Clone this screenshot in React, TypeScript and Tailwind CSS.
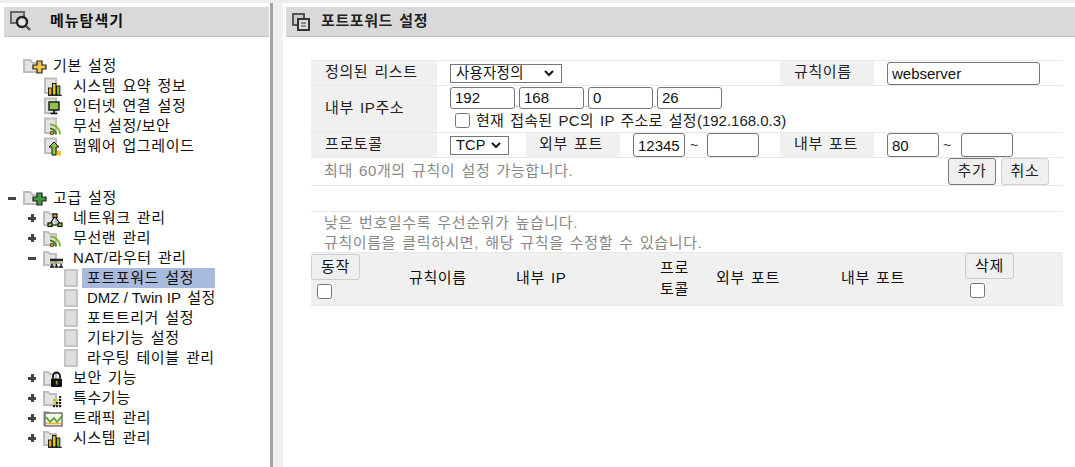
import type { ReactNode } from "react";

const FONT = "font-['Liberation_Sans','Noto_Sans_CJK_KR',sans-serif]";
const TEXT = "text-[15px] tracking-[0.6px] [word-spacing:1.5px]";

function Folder({ big = false, children }: { big?: boolean; children?: ReactNode }) {
  // folder tree icon, overlay drawn by children in the same box
  return (
    <svg width={big ? 24 : 22} height="20" viewBox={big ? "0 0 24 20" : "0 0 22 20"} className="block shrink-0">
      {big ? (
        <path d="M1 4h6l3 3h6v9H1z" fill="#e4e4e4" stroke="#bdbdbd" strokeWidth="2" />
      ) : (
        <path d="M1 4h4l2 2h6v11H1z" fill="#e4e4e4" stroke="#bdbdbd" strokeWidth="2" />
      )}
      {children}
    </svg>
  );
}

function Doc({ children }: { children?: ReactNode }) {
  return (
    <svg width="20" height="20" viewBox="0 0 20 20" className="block shrink-0">
      <rect x="2" y="2.5" width="11" height="14.5" fill="#e4e4e4" stroke="#bdbdbd" strokeWidth="2" />
      {children}
    </svg>
  );
}

function Page() {
  return (
    <svg width="14" height="18" viewBox="0 0 14 18" className="block shrink-0">
      <rect x="1" y="1" width="12" height="16" fill="#dedede" stroke="#c4c4c4" strokeWidth="2" />
    </svg>
  );
}

const Plus = ({ fill }: { fill: string }) => (
  <path d="M10 9h4V5h5v4h4v4h-4v4h-5v-4h-4z" fill={fill} stroke="#222" strokeWidth="1.2" />
);

const Bars = () => (
  <g stroke="#111" strokeWidth="0.9">
    <rect x="5.5" y="12" width="3.4" height="7" fill="#f0a020" />
    <rect x="9.5" y="7.5" width="3.4" height="11.5" fill="#e8c820" />
    <rect x="13.5" y="10" width="3.4" height="9" fill="#7cb82f" />
    <path d="M5 19.4h14" />
  </g>
);

const Monitor = () => (
  <g>
    <rect x="6" y="6" width="10" height="8" fill="#8fc34a" stroke="#111" strokeWidth="1.4" />
    <path d="M11 14v3M7.5 17.5h7" stroke="#111" strokeWidth="1.6" />
  </g>
);

const Wifi = () => (
  <g fill="none" strokeWidth="1.8" transform="translate(1 2)">
    <circle cx="8" cy="15" r="1.8" fill="#e8a020" stroke="#222" strokeWidth="0.8" />
    <path d="M6 10.5a6 6 0 0 1 6 6" stroke="#3f7a18" />
    <path d="M6 6.5a10 10 0 0 1 10 10" stroke="#7cb82f" />
  </g>
);

const Upload = () => (
  <g>
    <rect x="9" y="15" width="9" height="4.5" fill="#f0c030" />
    <path d="M11 6l5 5h-3v8H9v-8H6z" fill="#8cc63f" stroke="#1a1a1a" strokeWidth="1" />
  </g>
);

const Network = () => (
  <g fill="none" stroke="#111" strokeWidth="1.2" transform="translate(1 2)">
    <path d="M11 6l-5 8M11 6l5 8M6 15h10" />
    <rect x="9" y="4" width="4" height="3.5" fill="#f0a020" />
    <rect x="4" y="13" width="4" height="3.5" fill="#8cc63f" />
    <rect x="14" y="13" width="4" height="3.5" fill="#8cc63f" />
  </g>
);

const Router = () => (
  <g stroke="#111" strokeWidth="1.4" fill="none" transform="translate(1 2)">
    <path d="M6 10h13" strokeWidth="2.6" stroke="#222" />
    <path d="M6 13h13" stroke="#8a9a50" />
    <path d="M8 14v3M12.5 14v3M17 14v3M6 17h4M10.5 17h4M15 17h4" />
  </g>
);

const Lock = () => (
  <g transform="translate(2 1.5)">
    <path d="M8 9V6.5a3.5 3.5 0 0 1 7 0V9" fill="none" stroke="#111" strokeWidth="1.8" />
    <rect x="6" y="9" width="11" height="8.5" rx="1" fill="#111" />
    <rect x="10.8" y="11.5" width="1.8" height="3.5" fill="#7cb82f" />
  </g>
);

const DOTS: [number, number, string][] = [
  [15, 8, "#222"],
  [9, 11, "#8cc63f"],
  [12, 11, "#e8c820"],
  [15, 11, "#222"],
  [9, 14, "#e8c820"],
  [12, 14, "#222"],
  [15, 14, "#222"],
  [9, 17, "#222"],
  [12, 17, "#222"],
  [15, 17, "#222"],
];

const Dots = () => (
  <g transform="translate(1 0)">
    {DOTS.map(([x, y, c], i) => (
      <rect key={i} x={x} y={y} width="2.2" height="2.2" fill={c} />
    ))}
  </g>
);

const Traffic = () => (
  <g fill="none">
    <rect x="2" y="5" width="17" height="13" fill="#f6f6e6" stroke="#555" strokeWidth="1.2" />
    <path d="M3 9l4 5 4-4 3 4 5-6" stroke="#5aa02c" strokeWidth="1.8" />
    <path d="M3 15.5h15" stroke="#f0b030" strokeWidth="1.6" />
  </g>
);

function TreeRow({
  toggle,
  indent,
  icon,
  selected,
  textGap,
  children,
}: {
  toggle?: "+" | "-";
  indent: string;
  icon: ReactNode;
  selected?: boolean;
  textGap: string;
  children: ReactNode;
}) {
  return (
    <div className={`flex h-5 items-center ${indent}`}>
      {toggle && (
        <span className="relative mr-[7px] block h-2 w-2 shrink-0">
          <span className="absolute left-0 top-[3px] h-[2.5px] w-2 bg-[#444]" />
          {toggle === "+" && <span className="absolute left-[3px] top-0 h-2 w-[2.5px] bg-[#444]" />}
        </span>
      )}
      {icon}
      <span className={`${textGap} h-5 ${selected ? "bg-[#a8bbdc]" : ""} whitespace-nowrap leading-[19px] ${TEXT} text-[#111]`}>
        {children}
      </span>
    </div>
  );
}

function Sidebar() {
  const lv2 = "pl-[64px]";
  const lv1 = "pl-[28px]";
  return (
    <aside className="w-[270px] shrink-0">
      <div className="ml-[4px] flex h-[30px] w-[265px] items-center border-b border-[#c4c4c4] bg-[#d9d9d9]">
        <svg width="22" height="24" viewBox="0 0 22 24" className="ml-[6px] block shrink-0">
          <rect x="1" y="2" width="13" height="11" fill="#ccc" stroke="#666" strokeWidth="2" />
          <circle cx="12" cy="12" r="5" fill="#e4e4e4" stroke="#222" strokeWidth="2.4" />
          <path d="M16 16l4 4" stroke="#555" strokeWidth="2.4" />
        </svg>
        <span className="ml-[18px] text-[15px] font-bold tracking-[1px] text-[#111]">메뉴탐색기</span>
      </div>
      <div className="pt-[19px]">
        <TreeRow indent="pl-[23px]" textGap="ml-[6px]" icon={<Folder big><Plus fill="#f2c350" /></Folder>}>
          기본 설정
        </TreeRow>
        <TreeRow indent="pl-[43px]" textGap="ml-[10px]" icon={<Doc><Bars /></Doc>}>시스템 요약 정보</TreeRow>
        <TreeRow indent="pl-[43px]" textGap="ml-[10px]" icon={<Doc><Monitor /></Doc>}>인터넷 연결 설정</TreeRow>
        <TreeRow indent="pl-[43px]" textGap="ml-[10px]" icon={<Doc><Wifi /></Doc>}>무선 설정/보안</TreeRow>
        <TreeRow indent="pl-[43px]" textGap="ml-[10px]" icon={<Doc><Upload /></Doc>}>펌웨어 업그레이드</TreeRow>

        <div className="h-[32px]" />

        <TreeRow toggle="-" indent="pl-[8px]" textGap="ml-[6px]" icon={<Folder big><Plus fill="#3f9a3f" /></Folder>}>
          고급 설정
        </TreeRow>
        <TreeRow toggle="+" indent={lv1} textGap="ml-[8px]" icon={<Folder><Network /></Folder>}>네트워크 관리</TreeRow>
        <TreeRow toggle="+" indent={lv1} textGap="ml-[8px]" icon={<Folder><Wifi /></Folder>}>무선랜 관리</TreeRow>
        <TreeRow toggle="-" indent={lv1} textGap="ml-[8px]" icon={<Folder><Router /></Folder>}>NAT/라우터 관리</TreeRow>
        <TreeRow indent={lv2} textGap="ml-[4px] w-[133px] pl-[5px]" selected icon={<Page />}>포트포워드 설정</TreeRow>
        <TreeRow indent={lv2} textGap="ml-[9px]" icon={<Page />}>
          <span className="tracking-normal [word-spacing:0]">DMZ / Twin IP</span> 설정
        </TreeRow>
        <TreeRow indent={lv2} textGap="ml-[9px]" icon={<Page />}>포트트리거 설정</TreeRow>
        <TreeRow indent={lv2} textGap="ml-[9px]" icon={<Page />}>기타기능 설정</TreeRow>
        <TreeRow indent={lv2} textGap="ml-[9px]" icon={<Page />}>라우팅 테이블 관리</TreeRow>
        <TreeRow toggle="+" indent={lv1} textGap="ml-[8px]" icon={<Folder><Lock /></Folder>}>보안 기능</TreeRow>
        <TreeRow toggle="+" indent={lv1} textGap="ml-[8px]" icon={<Folder><Dots /></Folder>}>특수기능</TreeRow>
        <TreeRow toggle="+" indent={lv1} textGap="ml-[8px]" icon={<Folder><Traffic /></Folder>}>트래픽 관리</TreeRow>
        <TreeRow toggle="+" indent={lv1} textGap="ml-[8px]" icon={<Folder><Bars /></Folder>}>시스템 관리</TreeRow>
      </div>
    </aside>
  );
}

const inputCls =
  "box-border rounded-[3px] border border-[#767676] bg-white px-[4px] text-[15px] text-[#111] outline-none";
const labelCls = `flex items-center bg-[#f0f0f0] pb-[2px] ${TEXT} text-[#222]`;
const rowLine = "border-b border-[#ece9dc]";

function IpInput({ value }: { value: string }) {
  return <input readOnly value={value} className={`${inputCls} h-[22px] w-[65px]`} />;
}

function Dot() {
  return <span className="w-[4px] text-center text-[10px] leading-[10px] text-[#555]">.</span>;
}

function Select({ value, width }: { value: string; width: string }) {
  return (
    <div className={`relative h-[19px] ${width}`}>
      <select
        className="box-border block h-[19px] w-full appearance-none border border-[#767676] bg-white pl-[5px] text-[14.5px] leading-[17px] tracking-[0.2px] text-[#111]"
        defaultValue={value}
      >
        <option>{value}</option>
      </select>
      <svg width="10" height="7" viewBox="0 0 10 7" className="pointer-events-none absolute right-[8px] top-[6px]">
        <path d="M1 1l4 4 4-4" fill="none" stroke="#111" strokeWidth="2" />
      </svg>
    </div>
  );
}

function PortForm() {
  return (
    <div className="w-[752px] border-t border-[#ece9dc]">
      {/* 정의된 리스트 */}
      <div className={`flex h-[25px] ${rowLine}`}>
        <div className={`${labelCls} w-[126px] pl-[14px]`}>정의된 리스트</div>
        <div className="flex w-[343px] items-center pl-[13px]">
          <Select value="사용자정의" width="w-[112px]" />
        </div>
        <div className={`${labelCls} w-[94px] pl-[14px]`}>규칙이름</div>
        <div className="flex items-center pl-[13px]">
          <input readOnly value="webserver" className={`${inputCls} h-[23px] w-[153px]`} />
        </div>
      </div>

      {/* 내부 IP주소 */}
      <div className={`flex h-[47px] ${rowLine}`}>
        <div className={`${labelCls} w-[126px] pl-[14px]`}>내부 IP주소</div>
        <div className="pl-[13px] pt-px">
          <div className="flex items-end">
            <IpInput value="192" />
            <Dot />
            <IpInput value="168" />
            <Dot />
            <IpInput value="0" />
            <Dot />
            <IpInput value="26" />
          </div>
          <label className="mt-[2px] flex h-[20px] items-center whitespace-nowrap pl-[5px] text-[15px] tracking-[0.3px] [word-spacing:1.5px] text-[#222]">
            <input type="checkbox" className="m-0 mr-[6px] -mt-[2px] h-[15px] w-[15px]" />
            <span>
              현재 접속된 PC의 IP 주소로 설정<span className="tracking-normal">(192.168.0.3)</span>
            </span>
          </label>
        </div>
      </div>

      {/* 프로토콜 */}
      <div className={`flex h-[25px] ${rowLine}`}>
        <div className={`${labelCls} w-[126px] pl-[14px]`}>프로토콜</div>
        <div className="flex w-[89px] items-center pl-[13px]">
          <Select value="TCP" width="w-[59px]" />
        </div>
        <div className={`${labelCls} w-[94px] pl-[13px]`}>외부 포트</div>
        <div className="flex w-[160px] items-center pl-[13px] text-[14px] text-[#333]">
          <input readOnly value="12345" className={`${inputCls} h-[24px] w-[52px]`} />
          <span className="w-[22px] pl-[5px]">~</span>
          <input readOnly className={`${inputCls} h-[24px] w-[52px]`} />
        </div>
        <div className={`${labelCls} w-[94px] pl-[14px]`}>내부 포트</div>
        <div className="flex items-center pl-[13px] text-[14px] text-[#333]">
          <input readOnly value="80" className={`${inputCls} h-[24px] w-[52px]`} />
          <span className="w-[22px] pl-[4px]">~</span>
          <input readOnly className={`${inputCls} h-[24px] w-[52px]`} />
        </div>
      </div>

      {/* 안내 */}
      <div className={`flex h-[28px] items-center justify-between ${rowLine} pl-[13px] pr-[14px]`}>
        <span className={`${TEXT} text-[#888]`}>최대 60개의 규칙이 설정 가능합니다.</span>
        <div className="flex gap-[5px]">
          <button className="box-border h-[27px] w-[48px] rounded-[3px] border border-[#767676] bg-[#efefef] text-[15px] tracking-[0.6px] text-[#222]">추가</button>
          <button className="box-border h-[27px] w-[48px] rounded-[3px] border border-[#d0d0d0] bg-[#efefef] text-[15px] tracking-[0.6px] text-[#222]">취소</button>
        </div>
      </div>
      <div className={`h-[26px] ${rowLine}`} />

      <div className={`h-[40px] pl-[13px] pt-px leading-[20px] ${TEXT} text-[#888]`}>
        <p>낮은 번호일수록 우선순위가 높습니다.</p>
        <p>규칙이름을 클릭하시면, 해당 규칙을 수정할 수 있습니다.</p>
      </div>

      {/* 목록 헤더 */}
      <div className={`flex h-[54px] items-center border-y border-[#ece9dc] bg-[#f0f0f0] pb-[2px] ${TEXT} text-[#111]`}>
        <div className="w-[98px] self-start pt-[1px]">
          <button className="box-border block h-[26px] w-[49px] rounded-[3px] border border-[#ccc] bg-[#efefef] text-[15px] tracking-[0.6px]">동작</button>
          <input type="checkbox" className="m-0 ml-[6px] mt-[4px] block h-[15px] w-[15px]" />
        </div>
        <div className="w-[107px]">규칙이름</div>
        <div className="w-[144px]">내부 IP</div>
        <div className="w-[56px] leading-[21px]">
          프로
          <br />
          토콜
        </div>
        <div className="w-[125px]">외부 포트</div>
        <div className="w-[124px]">내부 포트</div>
        <div className="self-start">
          <button className="box-border block h-[26px] w-[49px] rounded-[3px] border border-[#ccc] bg-[#efefef] text-[15px] tracking-[0.6px]">삭제</button>
          <input type="checkbox" className="m-0 ml-[5px] mt-[4px] block h-[15px] w-[15px]" />
        </div>
      </div>
    </div>
  );
}

export default function App() {
  return (
    <div className={`${FONT} h-[467px] w-[1075px] overflow-hidden bg-white`}>
      <div className="h-[3px] bg-[#ededed]" />
      <div className="flex h-[464px] pt-[4px]">
        <Sidebar />
        <div className="-mt-[4px] w-[3px] shrink-0 bg-[#a4a4a4]" />
        <div className="-mt-[4px] w-[10px] shrink-0 bg-[#efefef]" />
        <main className="min-w-0 flex-1">
          <div className="ml-[3px] flex h-[30px] items-center border-b border-[#c4c4c4] bg-[#d9d9d9]">
            <svg width="18" height="18" viewBox="0 0 18 18" className="ml-[6px] block shrink-0">
              <rect x="1" y="1" width="11" height="11" fill="#ccc" stroke="#555" strokeWidth="2" />
              <rect x="6" y="6" width="11" height="11" fill="#ddd" stroke="#333" strokeWidth="2" />
              <path d="M9 10h5M9 13h5" stroke="#333" />
            </svg>
            <span className="ml-[11px] text-[15px] font-bold tracking-[0.6px] [word-spacing:1.5px] text-[#222]">포트포워드 설정</span>
          </div>
          <div className="pl-[28px] pt-[23px]">
            <PortForm />
          </div>
        </main>
      </div>
    </div>
  );
}
